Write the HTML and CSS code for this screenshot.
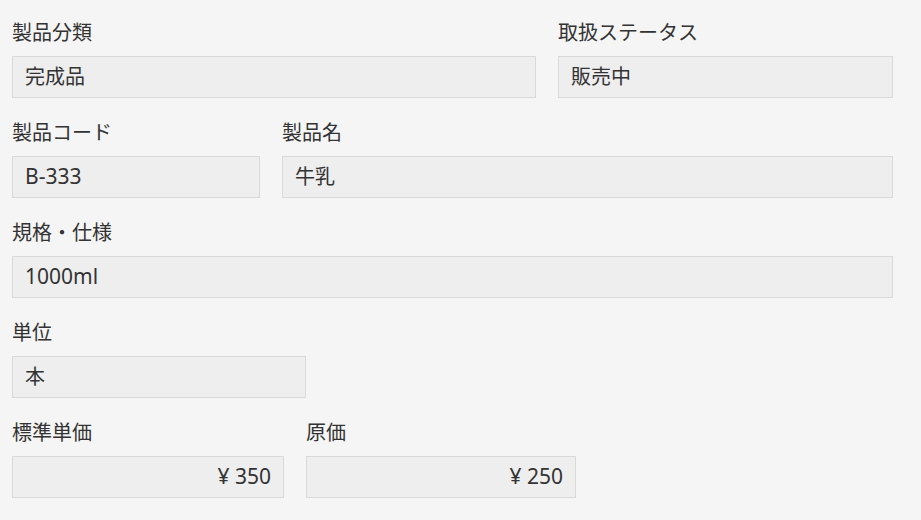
FILE: index.html
```html
<!DOCTYPE html>
<html lang="ja">

<head>
    <meta charset="UTF-8">
    <meta name="viewport" content="width=device-width, initial-scale=1.0">
    <title>製品詳細</title>
    <link rel="stylesheet" href="styles.css">
</head>

<body>
    <div class="form">
        <div class="row">
            <div class="item w-524">
                <label>製品分類</label>
                <div class="field">完成品</div>
            </div>
            <div class="item w-335">
                <label>取扱ステータス</label>
                <div class="field">販売中</div>
            </div>
        </div>
        <div class="row">
            <div class="item w-248">
                <label>製品コード</label>
                <div class="field num">B-333</div>
            </div>
            <div class="item w-611">
                <label>製品名</label>
                <div class="field">牛乳</div>
            </div>
        </div>
        <div class="row">
            <div class="item w-881">
                <label>規格・仕様</label>
                <div class="field num">1000ml</div>
            </div>
        </div>
        <div class="row">
            <div class="item w-294">
                <label>単位</label>
                <div class="field">本</div>
            </div>
        </div>
        <div class="row">
            <div class="item w-272">
                <label>標準単価</label>
                <div class="field num price">¥ 350</div>
            </div>
            <div class="item w-270">
                <label>原価</label>
                <div class="field num price">¥ 250</div>
            </div>
        </div>
    </div>
</body>

</html>
```

FILE: styles.css
```css
* {
    margin: 0;
    padding: 0;
    box-sizing: border-box;
}

body {
    background-color: #f5f5f5;
    color: #333;
    font-family: "Noto Sans", "Noto Sans CJK JP", sans-serif;
    font-size: 20px;
}

.form {
    padding: 18px 12px 0;
}

.row {
    display: flex;
    gap: 22px;
    margin-bottom: 20px;
}

label {
    display: block;
    height: 30px;
    line-height: 30px;
    margin-bottom: 8px;
}

.field {
    height: 42px;
    line-height: 40px;
    padding: 0 12px;
    background-color: #eee;
    border: 1px solid #d9d9d9;
}

/* 英数字は少し大きめ */
.num {
    font-size: 21px;
    line-height: 39px;
}

.price {
    text-align: right;
}

.w-524 { width: 524px; }
.w-335 { width: 335px; }
.w-248 { width: 248px; }
.w-611 { width: 611px; }
.w-881 { width: 881px; }
.w-294 { width: 294px; }
.w-272 { width: 272px; }
.w-270 { width: 270px; }
```
